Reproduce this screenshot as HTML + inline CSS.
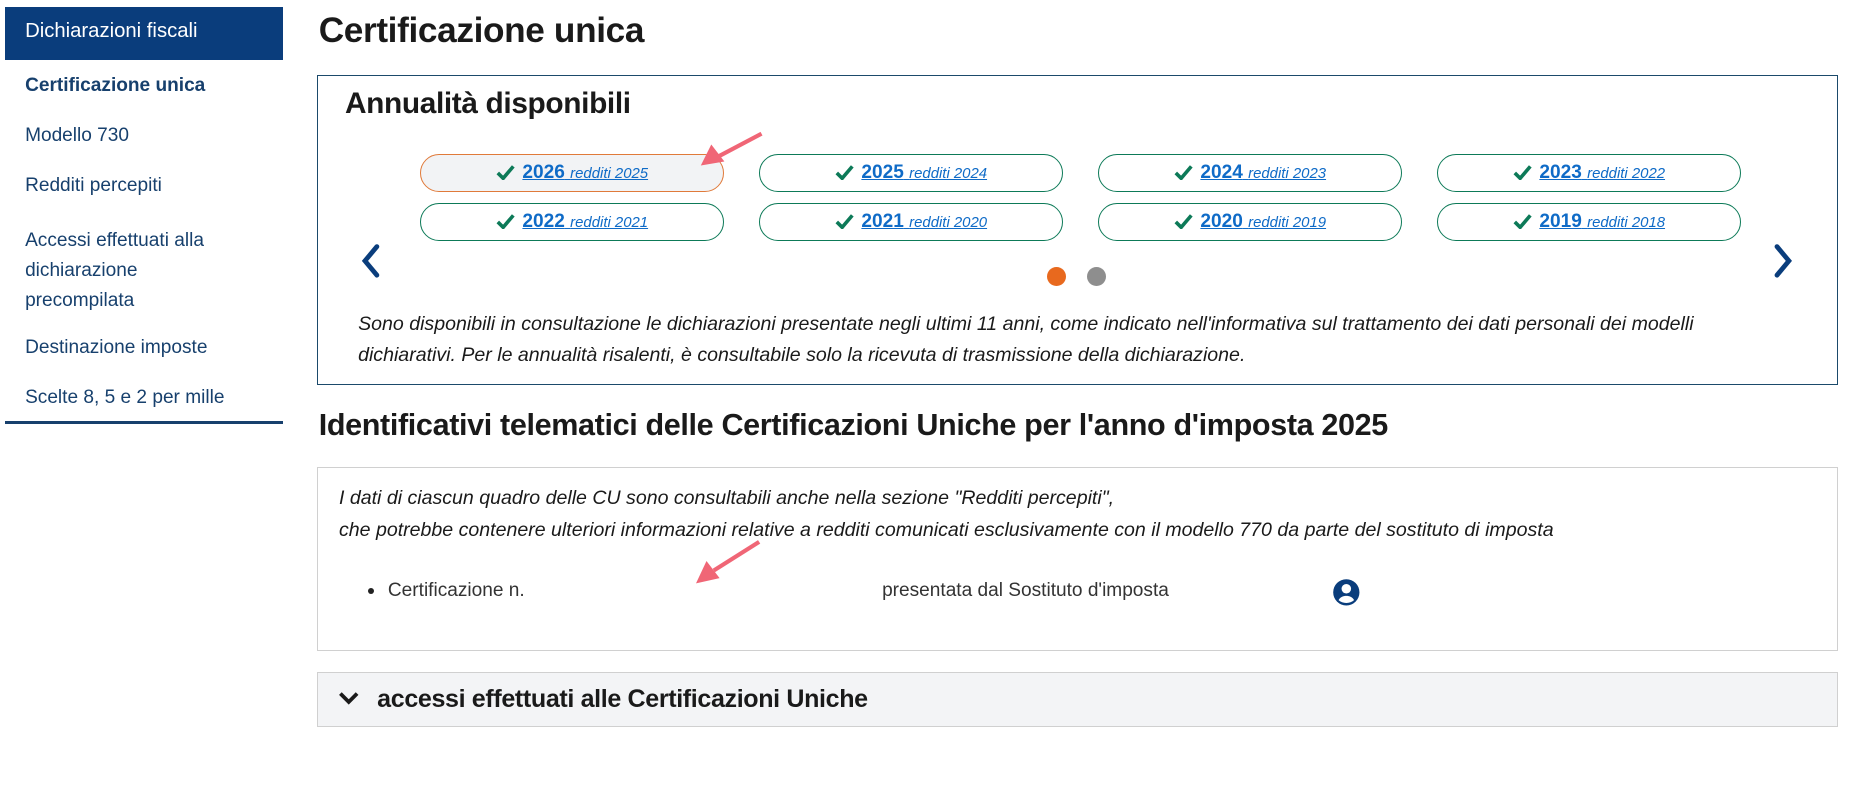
<!DOCTYPE html>
<html><head><meta charset="utf-8"><style>
html,body{margin:0;padding:0;background:#fff;width:1862px;height:807px;overflow:hidden}
#w{zoom:1.1936;position:relative;width:1560px;height:676px;font-family:"Liberation Sans",sans-serif;color:#1a1a1a}
.a{position:absolute;white-space:nowrap}
.hd{font-family:"Liberation Sans",sans-serif;font-weight:bold;letter-spacing:-0.3px}
.side{color:#17406d;font-size:16px}
.pill{position:absolute;width:253px;height:30px;border:1px solid #0d7a58;border-radius:16px;text-align:center;line-height:30px}
.pill a{color:#0f6bc7;text-decoration:underline}
.pill b{font-size:16px}
.pill i{font-size:12.5px}
.pill svg{vertical-align:-2px;margin-right:6px}
.it{font-style:italic}
</style></head><body><div id="w">
<div class="a" style="left:4px;top:6px;width:233px;height:44px;background:#0a3d7c"></div>
<div class="a side" style="left:21px;top:17px;color:#fff;font-size:17px">Dichiarazioni fiscali</div>
<div class="a side" style="left:21px;top:63px;font-weight:bold">Certificazione unica</div>
<div class="a side" style="left:21px;top:105px">Modello 730</div>
<div class="a side" style="left:21px;top:147px">Redditi percepiti</div>
<div class="a side" style="left:21px;top:189px;line-height:25.5px">Accessi effettuati alla<br>dichiarazione<br>precompilata</div>
<div class="a side" style="left:21px;top:282px">Destinazione imposte</div>
<div class="a side" style="left:21px;top:324px">Scelte 8, 5 e 2 per mille</div>
<div class="a" style="left:4px;top:353px;width:233px;height:2px;background:#17406d"></div>

<div class="a hd" style="left:267px;top:9px;font-size:29.5px">Certificazione unica</div>
<div class="a" style="left:266px;top:63px;width:1272px;height:258px;border:1px solid #1b4a6b"></div>
<div class="a hd" style="left:289px;top:73px;font-size:25px">Annualità disponibili</div>

<div class="pill" style="left:352px;top:129px;border-color:#e07a3a;background:#f2f3f5"><a><svg width="16" height="14" viewBox="0 0 16 14"><path d="M1.5 7.5l4.5 4.5 8.5-10" fill="none" stroke="#0d7a58" stroke-width="3"/></svg><b>2026</b> <i>redditi 2025</i></a></div>
<div class="pill" style="left:636px;top:129px"><a><svg width="16" height="14" viewBox="0 0 16 14"><path d="M1.5 7.5l4.5 4.5 8.5-10" fill="none" stroke="#0d7a58" stroke-width="3"/></svg><b>2025</b> <i>redditi 2024</i></a></div>
<div class="pill" style="left:920px;top:129px"><a><svg width="16" height="14" viewBox="0 0 16 14"><path d="M1.5 7.5l4.5 4.5 8.5-10" fill="none" stroke="#0d7a58" stroke-width="3"/></svg><b>2024</b> <i>redditi 2023</i></a></div>
<div class="pill" style="left:1204px;top:129px"><a><svg width="16" height="14" viewBox="0 0 16 14"><path d="M1.5 7.5l4.5 4.5 8.5-10" fill="none" stroke="#0d7a58" stroke-width="3"/></svg><b>2023</b> <i>redditi 2022</i></a></div>
<div class="pill" style="left:352px;top:170px"><a><svg width="16" height="14" viewBox="0 0 16 14"><path d="M1.5 7.5l4.5 4.5 8.5-10" fill="none" stroke="#0d7a58" stroke-width="3"/></svg><b>2022</b> <i>redditi 2021</i></a></div>
<div class="pill" style="left:636px;top:170px"><a><svg width="16" height="14" viewBox="0 0 16 14"><path d="M1.5 7.5l4.5 4.5 8.5-10" fill="none" stroke="#0d7a58" stroke-width="3"/></svg><b>2021</b> <i>redditi 2020</i></a></div>
<div class="pill" style="left:920px;top:170px"><a><svg width="16" height="14" viewBox="0 0 16 14"><path d="M1.5 7.5l4.5 4.5 8.5-10" fill="none" stroke="#0d7a58" stroke-width="3"/></svg><b>2020</b> <i>redditi 2019</i></a></div>
<div class="pill" style="left:1204px;top:170px"><a><svg width="16" height="14" viewBox="0 0 16 14"><path d="M1.5 7.5l4.5 4.5 8.5-10" fill="none" stroke="#0d7a58" stroke-width="3"/></svg><b>2019</b> <i>redditi 2018</i></a></div>

<svg class="a" style="left:301px;top:204px" width="20" height="30" viewBox="0 0 20 30"><path d="M15 3L5 15l10 12" fill="none" stroke="#0a3d7c" stroke-width="4" stroke-linecap="round"/></svg>
<svg class="a" style="left:1484px;top:204px" width="20" height="30" viewBox="0 0 20 30"><path d="M5 3l10 12L5 27" fill="none" stroke="#0a3d7c" stroke-width="4" stroke-linecap="round"/></svg>
<div class="a" style="left:877px;top:224px;width:16px;height:16px;border-radius:50%;background:#e8691e"></div>
<div class="a" style="left:911px;top:224px;width:16px;height:16px;border-radius:50%;background:#8e8e8e"></div>
<div class="a it" style="left:300px;top:259px;line-height:26px;font-size:16.4px">Sono disponibili in consultazione le dichiarazioni presentate negli ultimi 11 anni, come indicato nell'informativa sul trattamento dei dati personali dei modelli<br>dichiarativi. Per le annualità risalenti, è consultabile solo la ricevuta di trasmissione della dichiarazione.</div>

<div class="a hd" style="left:267px;top:342px;font-size:25.6px">Identificativi telematici delle Certificazioni Uniche per l'anno d'imposta 2025</div>
<div class="a" style="left:266px;top:391px;width:1272px;height:153px;border:1px solid #d0d0d0"></div>
<div class="a it" style="left:284px;top:404px;line-height:27px;font-size:16.4px">I dati di ciascun quadro delle CU sono consultabili anche nella sezione "Redditi percepiti",<br>che potrebbe contenere ulteriori informazioni relative a redditi comunicati esclusivamente con il modello 770 da parte del sostituto di imposta</div>
<div class="a" style="left:308px;top:493px;width:5px;height:5px;border-radius:50%;background:#222"></div>
<div class="a" style="left:325px;top:486px;font-size:16px;color:#333">Certificazione n.</div>
<div class="a" style="left:739px;top:486px;font-size:16px;color:#333">presentata dal Sostituto d'imposta</div>
<svg class="a" style="left:1116px;top:484px" width="24" height="24" viewBox="0 0 24 24"><circle cx="12" cy="12" r="11" fill="#0a3d7c"/><circle cx="12" cy="9" r="4" fill="#fff"/><path d="M5.5 18.5c1.5-2.5 3.8-3.5 6.5-3.5s5 1 6.5 3.5c-1.8 1.6-4 2.4-6.5 2.4s-4.7-.8-6.5-2.4z" fill="#fff"/></svg>

<div class="a" style="left:266px;top:563px;width:1272px;height:44px;border:1px solid #d0d0d0;background:#f3f4f6"></div>
<svg class="a" style="left:283px;top:578px" width="18" height="14" viewBox="0 0 18 14"><path d="M2 3l7 7 7-7" fill="none" stroke="#1a1a1a" stroke-width="3.2"/></svg>
<div class="a hd" style="left:316px;top:574px;font-size:21px">accessi effettuati alle Certificazioni Uniche</div>

<svg class="a" style="left:0;top:0" width="1560" height="676"><g fill="#f06676" stroke="#f06676"><line x1="638" y1="112" x2="602" y2="131" stroke-width="3.5"/><path d="M588 138l8-16 10 13z"/><line x1="636" y1="454" x2="598" y2="478" stroke-width="3.5"/><path d="M584 488l8-17 10 13z"/></g></svg>
</div></body></html>
